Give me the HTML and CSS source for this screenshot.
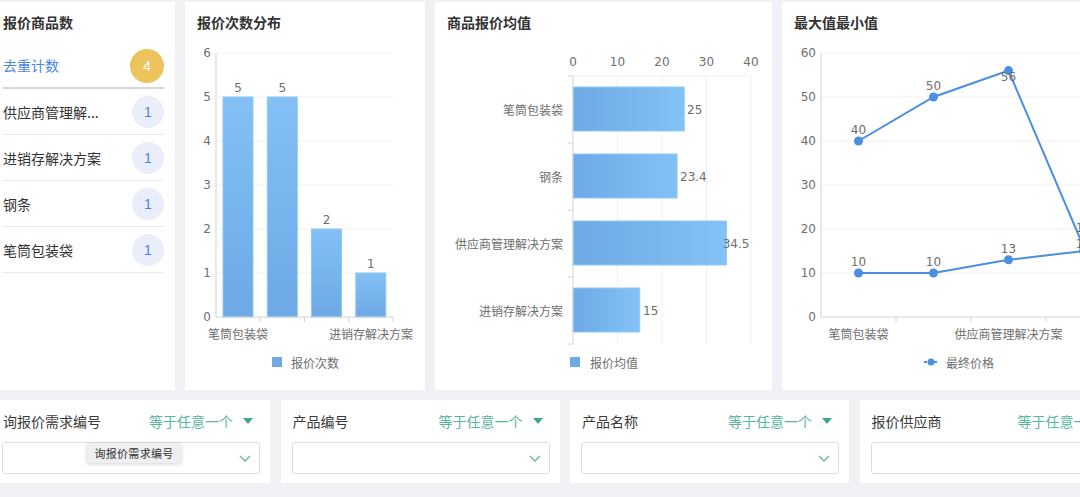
FILE: index.html
```html
<!DOCTYPE html>
<html lang="zh">
<head>
<meta charset="utf-8">
<title>报价分析</title>
<link rel="stylesheet" href="styles.css">
</head>
<body>
<div class="page">
  <div class="row-top">
    <section class="card card-count">
      <h2 class="card-title">报价商品数</h2>
      <ul class="count-list">
        <li class="count-item count-total"><span class="count-name">去重计数</span><span class="badge badge-gold">4</span></li>
        <li class="count-item"><span class="count-name">供应商管理解...</span><span class="badge">1</span></li>
        <li class="count-item"><span class="count-name">进销存解决方案</span><span class="badge">1</span></li>
        <li class="count-item"><span class="count-name">钢条</span><span class="badge">1</span></li>
        <li class="count-item"><span class="count-name">笔筒包装袋</span><span class="badge">1</span></li>
      </ul>
    </section>

    <section class="card card-bar">
      <h2 class="card-title">报价次数分布</h2>
      <svg class="chart" width="240" height="358" viewBox="0 0 240 358">
        <defs>
          <linearGradient id="gv" x1="0" y1="0" x2="0" y2="1">
            <stop offset="0" stop-color="#82c0f6"/>
            <stop offset="1" stop-color="#6ca9e5"/>
          </linearGradient>
        </defs>
        <g class="grid">
          <line x1="31" y1="21" x2="208" y2="21"/>
          <line x1="31" y1="65" x2="208" y2="65"/>
          <line x1="31" y1="109" x2="208" y2="109"/>
          <line x1="31" y1="153" x2="208" y2="153"/>
          <line x1="31" y1="197" x2="208" y2="197"/>
          <line x1="31" y1="241" x2="208" y2="241"/>
        </g>
        <g class="num" text-anchor="end">
          <text x="26" y="21">6</text>
          <text x="26" y="65">5</text>
          <text x="26" y="109">4</text>
          <text x="26" y="153">3</text>
          <text x="26" y="197">2</text>
          <text x="26" y="241">1</text>
          <text x="26" y="285">0</text>
        </g>
        <g class="bars">
          <rect x="38" y="65" width="30" height="220"/>
          <rect x="82.3" y="65" width="30" height="220"/>
          <rect x="126.5" y="197" width="30" height="88"/>
          <rect x="170.8" y="241" width="30" height="44"/>
        </g>
        <g class="num" text-anchor="middle">
          <text x="53" y="56">5</text>
          <text x="97.3" y="56">5</text>
          <text x="141.5" y="188">2</text>
          <text x="185.8" y="232">1</text>
        </g>
        <g class="axis">
          <line x1="31" y1="21" x2="31" y2="285"/>
          <line x1="31" y1="285" x2="208" y2="285"/>
          <line x1="75.25" y1="285" x2="75.25" y2="290"/>
          <line x1="119.5" y1="285" x2="119.5" y2="290"/>
          <line x1="163.75" y1="285" x2="163.75" y2="290"/>
          <line x1="208" y1="285" x2="208" y2="290"/>
        </g>
        <g class="cat" text-anchor="middle">
          <text x="53" y="301">笔筒包装袋</text>
          <text x="186" y="301">进销存解决方案</text>
        </g>
        <rect class="legend-box" x="87" y="325" width="10" height="10"/>
        <text class="cat" x="106" y="330">报价次数</text>
      </svg>
    </section>

    <section class="card card-hbar">
      <h2 class="card-title">商品报价均值</h2>
      <svg class="chart" width="337" height="358" viewBox="0 0 337 358">
        <defs>
          <linearGradient id="gh" x1="0" y1="0" x2="1" y2="0">
            <stop offset="0" stop-color="#6ca9e6"/>
            <stop offset="1" stop-color="#83c2f7"/>
          </linearGradient>
        </defs>
        <g class="grid">
          <line x1="138" y1="44" x2="316" y2="44"/>
          <line x1="182.5" y1="44" x2="182.5" y2="312"/>
          <line x1="227" y1="44" x2="227" y2="312"/>
          <line x1="271.5" y1="44" x2="271.5" y2="312"/>
          <line x1="316" y1="44" x2="316" y2="312"/>
        </g>
        <g class="num" text-anchor="middle">
          <text x="138" y="30">0</text>
          <text x="182.5" y="30">10</text>
          <text x="227" y="30">20</text>
          <text x="271.5" y="30">30</text>
          <text x="316" y="30">40</text>
        </g>
        <g class="hbars">
          <rect x="138" y="55" width="111.25" height="44"/>
          <rect x="138" y="122" width="104.1" height="44"/>
          <rect x="138" y="189" width="153.5" height="44"/>
          <rect x="138" y="256" width="66.75" height="44"/>
        </g>
        <g class="axis">
          <line x1="138" y1="44" x2="138" y2="312"/>
          <line x1="133" y1="44" x2="138" y2="44"/>
          <line x1="133" y1="111" x2="138" y2="111"/>
          <line x1="133" y1="178" x2="138" y2="178"/>
          <line x1="133" y1="245" x2="138" y2="245"/>
          <line x1="133" y1="312" x2="138" y2="312"/>
        </g>
        <g class="cat" text-anchor="end">
          <text x="128" y="77.5">笔筒包装袋</text>
          <text x="128" y="144.5">钢条</text>
          <text x="128" y="211.5">供应商管理解决方案</text>
          <text x="128" y="278.5">进销存解决方案</text>
        </g>
        <g class="num">
          <text x="252" y="77.5">25</text>
          <text x="245" y="144.5">23.4</text>
          <text x="287.7" y="211.5">34.5</text>
          <text x="208" y="278.5">15</text>
        </g>
        <rect class="legend-box" x="135" y="325" width="10" height="10"/>
        <text class="cat" x="155" y="330">报价均值</text>
      </svg>
    </section>

    <section class="card card-line">
      <h2 class="card-title">最大值最小值</h2>
      <svg class="chart" width="340" height="358" viewBox="0 0 340 358">
        <g class="grid">
          <line x1="39" y1="21" x2="340" y2="21"/>
          <line x1="39" y1="65" x2="340" y2="65"/>
          <line x1="39" y1="109" x2="340" y2="109"/>
          <line x1="39" y1="153" x2="340" y2="153"/>
          <line x1="39" y1="197" x2="340" y2="197"/>
          <line x1="39" y1="241" x2="340" y2="241"/>
        </g>
        <g class="num" text-anchor="end">
          <text x="34" y="21">60</text>
          <text x="34" y="65">50</text>
          <text x="34" y="109">40</text>
          <text x="34" y="153">30</text>
          <text x="34" y="197">20</text>
          <text x="34" y="241">10</text>
          <text x="34" y="285">0</text>
        </g>
        <g class="axis">
          <line x1="39" y1="21" x2="39" y2="285"/>
          <line x1="39" y1="285" x2="340" y2="285"/>
          <line x1="114" y1="285" x2="114" y2="290"/>
          <line x1="189" y1="285" x2="189" y2="290"/>
          <line x1="264" y1="285" x2="264" y2="290"/>
        </g>
        <polyline class="series" points="76.5,109 151.5,65 226.5,38.6 301.5,214.6"/>
        <polyline class="series" points="76.5,241 151.5,241 226.5,227.8 301.5,219"/>
        <g class="dots">
          <circle cx="76.5" cy="109" r="4.5"/>
          <circle cx="151.5" cy="65" r="4.5"/>
          <circle cx="226.5" cy="38.6" r="4.5"/>
          <circle cx="301.5" cy="214.6" r="4.5"/>
          <circle cx="76.5" cy="241" r="4.5"/>
          <circle cx="151.5" cy="241" r="4.5"/>
          <circle cx="226.5" cy="227.8" r="4.5"/>
          <circle cx="301.5" cy="219" r="4.5"/>
        </g>
        <g class="num" text-anchor="middle">
          <text x="76.5" y="98">40</text>
          <text x="151.5" y="54">50</text>
          <text x="226.5" y="45">56</text>
          <text x="301.5" y="196">16</text>
          <text x="76.5" y="230">10</text>
          <text x="151.5" y="230">10</text>
          <text x="226.5" y="216.5">13</text>
          <text x="301.5" y="212">15</text>
        </g>
        <g class="cat" text-anchor="middle">
          <text x="76.5" y="301">笔筒包装袋</text>
          <text x="226.5" y="301">供应商管理解决方案</text>
        </g>
        <line class="legend-line" x1="142" y1="330" x2="156" y2="330"/>
        <circle class="legend-dot" cx="149" cy="330" r="3.5"/>
        <text class="cat" x="164" y="330">最终价格</text>
      </svg>
    </section>
  </div>

  <div class="row-filters">
    <div class="filter">
      <div class="filter-head">
        <span class="filter-name">询报价需求编号</span>
        <span class="filter-op">等于任意一个<span class="caret"></span></span>
      </div>
      <div class="select"><svg class="chev" width="12" height="7" viewBox="0 0 12 7"><path d="M1 1 L6 6 L11 1"/></svg></div>
      <div class="tooltip">询报价需求编号</div>
    </div>
    <div class="filter">
      <div class="filter-head">
        <span class="filter-name">产品编号</span>
        <span class="filter-op">等于任意一个<span class="caret"></span></span>
      </div>
      <div class="select"><svg class="chev" width="12" height="7" viewBox="0 0 12 7"><path d="M1 1 L6 6 L11 1"/></svg></div>
    </div>
    <div class="filter">
      <div class="filter-head">
        <span class="filter-name">产品名称</span>
        <span class="filter-op">等于任意一个<span class="caret"></span></span>
      </div>
      <div class="select"><svg class="chev" width="12" height="7" viewBox="0 0 12 7"><path d="M1 1 L6 6 L11 1"/></svg></div>
    </div>
    <div class="filter">
      <div class="filter-head">
        <span class="filter-name">报价供应商</span>
        <span class="filter-op">等于任意一个<span class="caret"></span></span>
      </div>
      <div class="select"><svg class="chev" width="12" height="7" viewBox="0 0 12 7"><path d="M1 1 L6 6 L11 1"/></svg></div>
    </div>
  </div>
</div>
</body>
</html>
```

FILE: styles.css
```css
* { box-sizing: border-box; }

html, body {
  margin: 0;
  padding: 0;
}

body {
  width: 1080px;
  height: 497px;
  overflow: hidden;
  background: #f0f1f5;
  font-family: "Noto Sans CJK SC", "Noto Sans", sans-serif;
  color: #333;
}

.page {
  margin-left: -9px;
  padding-top: 2px;
  width: 1260px;
}

.row-top {
  display: flex;
  gap: 10px;
  align-items: stretch;
}

.card {
  background: #fff;
  height: 388px;
  flex: none;
}

.card-title {
  margin: 0;
  padding: 10px 12px 0;
  height: 30px;
  font-size: 14px;
  line-height: 20px;
  font-weight: 700;
  color: #333;
}

.card-count { width: 184px; padding-right: 11px; }
.card-bar { width: 240px; }
.card-hbar { width: 337px; }
.card-line { width: 340px; }

.chart {
  display: block;
  overflow: hidden;
}

.count-list {
  list-style: none;
  margin: 11px 0 0 12px;
  padding: 0;
}

.count-item {
  height: 46px;
  display: flex;
  align-items: center;
  justify-content: space-between;
  border-bottom: 1px solid #ebebeb;
  font-size: 14px;
  color: #333;
}

.count-total {
  border-bottom: 2px solid #d6d6d6;
}

.count-total .count-name {
  color: #4a85e6;
}

.badge {
  width: 32px;
  height: 32px;
  border-radius: 50%;
  background: #e9eefa;
  color: #4a85e6;
  display: flex;
  align-items: center;
  justify-content: center;
  font-size: 14px;
  font-family: "Liberation Sans", "Noto Sans", sans-serif;
}

.count-total .badge { margin-top: 1px; }

.badge-gold {
  width: 34px;
  height: 34px;
  background: #eec25c;
  color: #fff;
}

/* chart styling */
.grid line { stroke: #f1f1f1; stroke-width: 1; }
.axis line { stroke: #d2d2d2; stroke-width: 1; }

.num {
  font-family: "DejaVu Sans", sans-serif;
  font-size: 12px;
  fill: #6e6e6e;
  dominant-baseline: central;
}

.num text { dominant-baseline: central; }

.cat {
  font-family: "Noto Sans CJK SC", sans-serif;
  font-size: 12px;
  fill: #6e6e6e;
  dominant-baseline: central;
}

.cat text { dominant-baseline: central; }

.bars rect {
  fill: url(#gv);
  stroke: #8fc8f6;
  stroke-width: 1;
}

.hbars rect {
  fill: url(#gh);
  stroke: #92caf7;
  stroke-width: 1;
}

.legend-box { fill: #6faae7; }

.series {
  fill: none;
  stroke: #4a8fe0;
  stroke-width: 2;
}

.dots circle { fill: #4a8fe0; }

.legend-line {
  stroke: #4a8fe0;
  stroke-width: 2;
  stroke-dasharray: 3 2;
}

.legend-dot { fill: #4a8fe0; }

/* filters */
.row-filters {
  display: flex;
  gap: 10.5px;
  margin-top: 10px;
}

.filter {
  position: relative;
  flex: none;
  width: 279px;
  height: 83px;
  background: #fff;
  padding: 11px 10px 0 11px;
}

.filter-head {
  height: 20px;
  display: flex;
  align-items: center;
  justify-content: space-between;
  padding: 0 7px 0 1px;
  font-size: 14px;
  line-height: 20px;
}

.filter-name { color: #3a3a3a; }

.filter-op {
  color: #58b6a1;
  display: flex;
  align-items: center;
}

.caret {
  margin-left: 10px;
  width: 0;
  height: 0;
  border-left: 5px solid transparent;
  border-right: 5px solid transparent;
  border-top: 6px solid #3fa58e;
}

.select {
  margin-top: 11px;
  height: 32px;
  border: 1px solid #dedede;
  border-radius: 3px;
  display: flex;
  align-items: center;
  justify-content: flex-end;
  padding-right: 8px;
}

.chev path {
  fill: none;
  stroke: #5fb8a4;
  stroke-width: 1.3;
}

.tooltip {
  position: absolute;
  left: 96px;
  top: 43px;
  width: 94px;
  height: 20px;
  background: #efefef;
  box-shadow: 0 1px 4px rgba(0,0,0,0.18);
  border-radius: 2px;
  font-size: 11px;
  line-height: 20px;
  text-align: center;
  letter-spacing: 0.3px;
  color: #333;
}
```
